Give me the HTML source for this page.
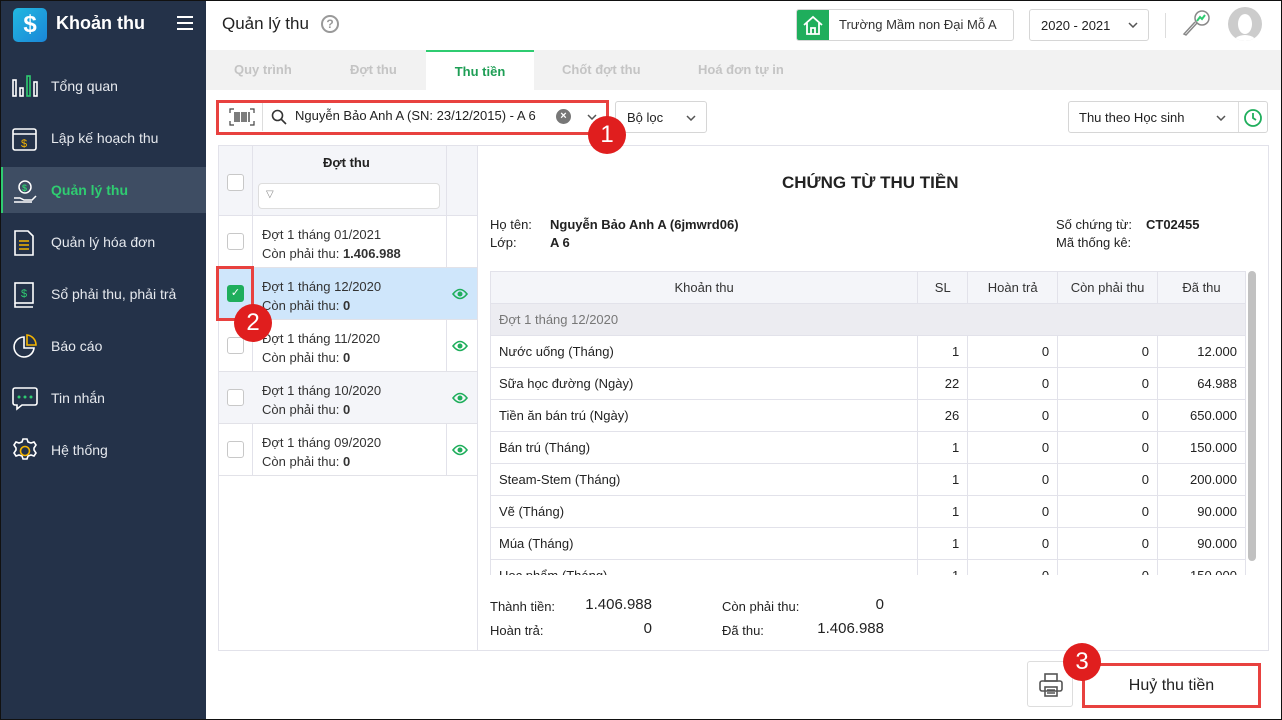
<!DOCTYPE html>
<html><head><meta charset="utf-8">
<style>
*{box-sizing:border-box;margin:0;padding:0}
body{width:1282px;height:720px;overflow:hidden;font-family:"Liberation Sans",sans-serif;font-size:13px;color:#222;background:#fff;position:relative}
.frame{position:absolute;left:0;top:0;width:1282px;height:720px;border:1px solid #111;pointer-events:none;z-index:50}
.side{position:absolute;left:0;top:0;width:206px;height:720px;background:#243249;color:#e6e9ee}
.logo{position:absolute;left:13px;top:8px;width:34px;height:34px;border-radius:5px;background:linear-gradient(135deg,#22b8e0,#1a86d8);color:#fff;font-weight:bold;font-size:24px;text-align:center;line-height:34px}
.brand{position:absolute;left:56px;top:13px;font-size:18px;font-weight:bold;color:#fff}
.burger{position:absolute;left:177px;top:16px;width:16px;height:14px;border-top:2px solid #fff;border-bottom:2px solid #fff}
.burger:after{content:"";position:absolute;left:0;top:4px;width:16px;height:2px;background:#fff}
.mi{position:absolute;left:0;width:206px;height:46px;font-size:14px;line-height:46px;padding-left:51px}
.mi svg{position:absolute;left:12px;top:11px}
.mi.act{background:#3e4d63;color:#2fcc71;font-weight:bold;border-left:3px solid #2fcc71;padding-left:48px}
.mi.act svg{left:9px}
.hdr{position:absolute;left:206px;top:0;right:0;height:50px;background:#fff;box-shadow:0 1px 3px rgba(0,0,0,.1)}
.tabs{position:absolute;left:206px;top:50px;right:0;height:40px;background:#f2f2f2}
.tab{position:absolute;top:0;height:40px;line-height:40px;font-size:13px;font-weight:bold;color:#c4c4c4}
.box{position:absolute;border:1px solid #d6d6d6;border-radius:3px;background:#fff}
.red{position:absolute;border:3px solid #e8413f}
.badge{position:absolute;width:38px;height:38px;border-radius:50%;background:#e01e1e;color:#fff;font-size:24px;text-align:center;line-height:38px;z-index:5}
.cb{position:absolute;width:17px;height:17px;border:1px solid #c8c8c8;border-radius:3px;background:#fff}
.row{position:absolute;left:219px;width:258px;height:52px;border-bottom:1px solid #e2e2e8}
.row .t{position:absolute;left:43px;top:9px;line-height:19px;font-size:13px;color:#333}
.eye{position:absolute;left:233px;top:20px}
table{border-collapse:collapse;position:absolute;left:490px;top:271px;width:756px;font-size:13px}
td,th{border:1px solid #e2e2ea;height:32px;padding:0 8px}
th{background:#f4f5f9;font-weight:normal;color:#333}
td.n{text-align:right}
.chev{position:absolute}
</style></head><body>
<div class="side">
 <div class="logo">$</div><div class="brand">Khoản thu</div><div class="burger"></div>
 <div class="mi" style="top:63px"><svg width="28" height="24" viewBox="0 0 28 24" fill="none" stroke="#fff" stroke-width="1.6"><rect x="1" y="6" width="3" height="16"/><rect x="8" y="14" width="3" height="8"/><rect x="15" y="2" width="3" height="20" stroke="#2fcc71"/><rect x="22" y="8" width="3" height="14"/></svg>Tổng quan</div>
 <div class="mi" style="top:115px"><svg width="26" height="26" viewBox="0 0 26 26" fill="none" stroke="#fff" stroke-width="1.6"><rect x="1" y="3" width="23" height="21" rx="2"/><line x1="1" y1="8" x2="24" y2="8"/><text x="9" y="21" font-size="11" fill="#f4b400" stroke="none" font-family="Liberation Sans">$</text></svg>Lập kế hoạch thu</div>
 <div class="mi act" style="top:167px"><svg width="26" height="26" viewBox="0 0 26 26" fill="none" stroke="#fff" stroke-width="1.5"><circle cx="13" cy="9" r="6"/><text x="10" y="13" font-size="9" fill="#2fcc71" stroke="none" font-family="Liberation Sans">$</text><path d="M2 20h6l4 2h8l4-4M2 24h18"/></svg>Quản lý thu</div>
 <div class="mi" style="top:219px"><svg width="24" height="26" viewBox="0 0 24 26" fill="none" stroke="#fff" stroke-width="1.6"><path d="M3 1h13l5 5v19H3z"/><path d="M7 11h10M7 15h10M7 19h10" stroke="#f4b400"/></svg>Quản lý hóa đơn</div>
 <div class="mi" style="top:271px"><svg width="24" height="26" viewBox="0 0 24 26" fill="none" stroke="#fff" stroke-width="1.6"><rect x="3" y="1" width="18" height="20"/><path d="M3 21v4h18"/><text x="9" y="15" font-size="11" fill="#2fcc71" stroke="none" font-family="Liberation Sans">$</text></svg>Sổ phải thu, phải trả</div>
 <div class="mi" style="top:323px"><svg width="26" height="26" viewBox="0 0 26 26" fill="none" stroke="#fff" stroke-width="1.6"><path d="M12 3a10 10 0 1 0 10 11H12z"/><path d="M15 1a10 10 0 0 1 9 10h-9z" stroke="#f4b400"/></svg>Báo cáo</div>
 <div class="mi" style="top:375px"><svg width="26" height="26" viewBox="0 0 26 26" fill="none" stroke="#fff" stroke-width="1.6"><path d="M3 2h20a2 2 0 0 1 2 2v13a2 2 0 0 1-2 2H10l-5 4v-4H3a2 2 0 0 1-2-2V4a2 2 0 0 1 2-2z"/><circle cx="7" cy="11" r="1.5" fill="#2fcc71" stroke="none"/><circle cx="13" cy="11" r="1.5" fill="#2fcc71" stroke="none"/><circle cx="19" cy="11" r="1.5" fill="#2fcc71" stroke="none"/></svg>Tin nhắn</div>
 <div class="mi" style="top:427px"><svg width="26" height="26" viewBox="0 0 26 26" fill="none" stroke="#fff" stroke-width="1.6"><path d="M11 1h4l1 3 3 1 3-1 2 3-2 3v2l2 3-2 3-3-1-3 1-1 3h-4l-1-3-3-1-3 1-2-3 2-3v-2L2 7l2-3 3 1 3-1z"/><circle cx="13" cy="13" r="4.5" stroke="#f4b400"/></svg>Hệ thống</div>
</div>
<div class="hdr">
 <div style="position:absolute;left:16px;top:14px;font-size:17px;color:#222">Quản lý thu</div>
 <div style="position:absolute;left:115px;top:15px;width:18px;height:18px;border:2px solid #999;border-radius:50%;color:#999;font-size:12px;font-weight:bold;text-align:center;line-height:14px">?</div>
 <div class="box" style="left:590px;top:9px;width:218px;height:32px;overflow:hidden"><div style="position:absolute;left:0;top:0;width:32px;height:32px;background:#1fae5c"><svg width="32" height="32" viewBox="0 0 32 32" fill="none" stroke="#fff" stroke-width="1.8"><path d="M7 15l9-8 9 8M10 13v11h12V13M14 24v-6h4v6"/></svg></div><div style="position:absolute;left:42px;top:7px;font-size:13px;color:#333">Trường Mầm non Đại Mỗ A</div></div>
 <div class="box" style="left:823px;top:9px;width:120px;height:32px"><div style="position:absolute;left:11px;top:8px;color:#222">2020 - 2021</div><svg class="chev" style="left:98px;top:12px" width="10" height="6" viewBox="0 0 10 6" fill="none" stroke="#555" stroke-width="1.5"><path d="M1 1l4 4 4-4"/></svg></div>
 <div style="position:absolute;left:959px;top:13px;width:1px;height:25px;background:#ddd"></div>
 <svg style="position:absolute;left:976px;top:8px" width="30" height="30" viewBox="0 0 30 30" fill="none" stroke="#888" stroke-width="1.5"><circle cx="20" cy="10" r="7"/><path d="M15 15L4 27l-2-1 11-12"/><path d="M15 13l3-4 2 2 3-4" stroke="#2fcc71" stroke-width="2"/></svg>
 <div style="position:absolute;left:1022px;top:7px;width:34px;height:34px;border-radius:50%;background:#ccc;overflow:hidden"><div style="position:absolute;left:10px;top:7px;width:14px;height:20px;border-radius:50%;background:#fff"></div><div style="position:absolute;left:4px;top:28px;width:26px;height:20px;border-radius:50%;background:#fff"></div></div>
</div>
<div class="tabs">
 <div class="tab" style="left:28px">Quy trình</div>
 <div class="tab" style="left:144px">Đợt thu</div>
 <div class="tab" style="left:220px;width:108px;background:#fff;color:#1e9e55;text-align:center;border-top:2px solid #2fcc71">Thu tiền</div>
 <div class="tab" style="left:356px">Chốt đợt thu</div>
 <div class="tab" style="left:492px">Hoá đơn tự in</div>
</div>
<svg style="position:absolute;left:229px;top:108px" width="26" height="18" viewBox="0 0 26 18" fill="none" stroke="#444" stroke-width="1.2"><path d="M1 5V1h4M21 1h4v4M25 13v4h-4M5 17H1v-4"/><path d="M6 4v10M8 4v10M10 4v10M13 4v10M15 4v10M17 4v10M20 4v10" stroke-width="1.4"/></svg>
<div style="position:absolute;left:262px;top:103px;width:1px;height:28px;background:#ddd"></div>
<svg style="position:absolute;left:271px;top:109px" width="16" height="16" viewBox="0 0 16 16" fill="none" stroke="#333" stroke-width="1.6"><circle cx="6.5" cy="6.5" r="5"/><path d="M10 10l5 5"/></svg>
<div style="position:absolute;left:295px;top:108px;width:242px;overflow:hidden;white-space:nowrap;font-size:13px;color:#222">Nguyễn Bảo Anh A (SN: 23/12/2015) - A 6</div>
<div style="position:absolute;left:556px;top:109px;width:15px;height:15px;border-radius:50%;background:#777;color:#fff;font-size:11px;line-height:15px;text-align:center;font-weight:bold">×</div>
<svg class="chev" style="left:587px;top:114px" width="10" height="6" viewBox="0 0 10 6" fill="none" stroke="#555" stroke-width="1.5"><path d="M1 1l4 4 4-4"/></svg>
<div class="red" style="left:216px;top:100px;width:393px;height:35px"></div>
<div class="badge" style="left:588px;top:116px">1</div>
<div class="box" style="left:615px;top:101px;width:92px;height:32px"><div style="position:absolute;left:11px;top:8px">Bộ lọc</div><svg class="chev" style="left:70px;top:13px" width="10" height="6" viewBox="0 0 10 6" fill="none" stroke="#555" stroke-width="1.5"><path d="M1 1l4 4 4-4"/></svg></div>
<div class="box" style="left:1068px;top:101px;width:200px;height:32px"><div style="position:absolute;left:10px;top:8px">Thu theo Học sinh</div><svg class="chev" style="left:147px;top:13px" width="10" height="6" viewBox="0 0 10 6" fill="none" stroke="#555" stroke-width="1.5"><path d="M1 1l4 4 4-4"/></svg><div style="position:absolute;left:169px;top:0;width:1px;height:30px;background:#ddd"></div><svg style="position:absolute;left:174px;top:6px" width="20" height="20" viewBox="0 0 20 20" fill="none" stroke="#1fae5c" stroke-width="1.8"><circle cx="10" cy="10" r="8"/><path d="M10 5v5l3 2"/></svg></div>
<div style="position:absolute;left:218px;top:145px;width:1051px;height:506px;border:1px solid #e2e2ea"></div>
<div style="position:absolute;left:219px;top:146px;width:258px;height:70px;background:#f4f5f9;border-bottom:1px solid #e2e2ea"></div>
<div style="position:absolute;left:477px;top:146px;width:1px;height:504px;background:#e2e2ea"></div>
<div style="position:absolute;left:252px;top:146px;width:1px;height:330px;background:#e2e2ea"></div>
<div style="position:absolute;left:446px;top:146px;width:1px;height:330px;background:#e2e2ea"></div>
<div style="position:absolute;left:323px;top:155px;font-weight:bold;font-size:13px">Đợt thu</div>
<div style="position:absolute;left:258px;top:183px;width:182px;height:26px;border:1px solid #ddd;border-radius:4px;background:#fff;font-size:10px;color:#888;padding:5px 0 0 7px">▽</div>
<div class="cb" style="left:227px;top:174px"></div>
<div class="row" style="top:216px"><div class="cb" style="left:8px;top:17px"></div><div class="t">Đợt 1 tháng 01/2021<br>Còn phải thu: <b>1.406.988</b></div></div>
<div class="row" style="top:268px;background:#cfe6fb"><div class="cb" style="left:8px;top:17px;background:#1fae5c;border-color:#1fae5c;color:#fff;font-size:11px;text-align:center;line-height:15px">✓</div><div class="t">Đợt 1 tháng 12/2020<br>Còn phải thu: <b>0</b></div><svg class="eye" width="16" height="12" viewBox="0 0 16 12"><path d="M1 6q7-9 14 0q-7 9-14 0z" fill="none" stroke="#1fae5c" stroke-width="1.6"/><circle cx="8" cy="6" r="2.5" fill="#1fae5c"/></svg></div>
<div class="row" style="top:320px"><div class="cb" style="left:8px;top:17px"></div><div class="t">Đợt 1 tháng 11/2020<br>Còn phải thu: <b>0</b></div><svg class="eye" width="16" height="12" viewBox="0 0 16 12"><path d="M1 6q7-9 14 0q-7 9-14 0z" fill="none" stroke="#1fae5c" stroke-width="1.6"/><circle cx="8" cy="6" r="2.5" fill="#1fae5c"/></svg></div>
<div class="row" style="top:372px;background:#f4f5f9"><div class="cb" style="left:8px;top:17px"></div><div class="t">Đợt 1 tháng 10/2020<br>Còn phải thu: <b>0</b></div><svg class="eye" width="16" height="12" viewBox="0 0 16 12"><path d="M1 6q7-9 14 0q-7 9-14 0z" fill="none" stroke="#1fae5c" stroke-width="1.6"/><circle cx="8" cy="6" r="2.5" fill="#1fae5c"/></svg></div>
<div class="row" style="top:424px"><div class="cb" style="left:8px;top:17px"></div><div class="t">Đợt 1 tháng 09/2020<br>Còn phải thu: <b>0</b></div><svg class="eye" width="16" height="12" viewBox="0 0 16 12"><path d="M1 6q7-9 14 0q-7 9-14 0z" fill="none" stroke="#1fae5c" stroke-width="1.6"/><circle cx="8" cy="6" r="2.5" fill="#1fae5c"/></svg></div>
<div class="red" style="left:216px;top:266px;width:38px;height:55px"></div>
<div class="badge" style="left:234px;top:304px">2</div>
<div style="position:absolute;left:782px;top:173px;font-size:17px;font-weight:bold">CHỨNG TỪ THU TIỀN</div>
<div style="position:absolute;left:490px;top:216px;line-height:18px">Họ tên:<br>Lớp:</div>
<div style="position:absolute;left:550px;top:216px;line-height:18px;font-weight:bold">Nguyễn Bảo Anh A (6jmwrd06)<br>A 6</div>
<div style="position:absolute;left:1056px;top:216px;line-height:18px">Số chứng từ:<br>Mã thống kê:</div>
<div style="position:absolute;left:1146px;top:216px;line-height:18px;font-weight:bold">CT02455</div>
<div style="position:absolute;left:490px;top:271px;width:766px;height:304px;overflow:hidden">
<table style="left:0;top:0">
<tr><th style="width:428px">Khoản thu</th><th style="width:50px">SL</th><th style="width:90px">Hoàn trả</th><th style="width:100px">Còn phải thu</th><th style="width:88px">Đã thu</th></tr>
<tr><td colspan="5" style="background:#ececf1;color:#777">Đợt 1 tháng 12/2020</td></tr>
<tr><td>Nước uống (Tháng)</td><td class="n">1</td><td class="n">0</td><td class="n">0</td><td class="n">12.000</td></tr>
<tr><td>Sữa học đường (Ngày)</td><td class="n">22</td><td class="n">0</td><td class="n">0</td><td class="n">64.988</td></tr>
<tr><td>Tiền ăn bán trú (Ngày)</td><td class="n">26</td><td class="n">0</td><td class="n">0</td><td class="n">650.000</td></tr>
<tr><td>Bán trú (Tháng)</td><td class="n">1</td><td class="n">0</td><td class="n">0</td><td class="n">150.000</td></tr>
<tr><td>Steam-Stem (Tháng)</td><td class="n">1</td><td class="n">0</td><td class="n">0</td><td class="n">200.000</td></tr>
<tr><td>Vẽ (Tháng)</td><td class="n">1</td><td class="n">0</td><td class="n">0</td><td class="n">90.000</td></tr>
<tr><td>Múa (Tháng)</td><td class="n">1</td><td class="n">0</td><td class="n">0</td><td class="n">90.000</td></tr>
<tr><td>Học phẩm (Tháng)</td><td class="n">1</td><td class="n">0</td><td class="n">0</td><td class="n">150.000</td></tr>
</table>
<div style="position:absolute;left:758px;top:0;width:8px;height:290px;background:#c1c1c1;border-radius:4px"></div>
</div>
<div style="position:absolute;left:490px;top:595px;line-height:24px">Thành tiền:<br>Hoàn trả:</div>
<div style="position:absolute;left:560px;top:593px;width:92px;text-align:right;line-height:24px;font-size:15px">1.406.988<br>0</div>
<div style="position:absolute;left:722px;top:595px;line-height:24px">Còn phải thu:<br>Đã thu:</div>
<div style="position:absolute;left:790px;top:593px;width:94px;text-align:right;line-height:24px;font-size:15px">0<br>1.406.988</div>
<div class="box" style="left:1027px;top:661px;width:46px;height:46px;border-color:#ddd"><svg style="position:absolute;left:10px;top:10px" width="26" height="26" viewBox="0 0 26 26" fill="none" stroke="#555" stroke-width="1.6"><rect x="7" y="2" width="12" height="7"/><rect x="2" y="9" width="22" height="10" rx="2"/><rect x="7" y="15" width="12" height="9"/><path d="M9 18h8M9 21h8"/></svg></div>
<div class="red" style="left:1082px;top:663px;width:179px;height:45px;background:#fff;text-align:center;line-height:39px;font-size:16px;color:#222">Huỷ thu tiền</div>
<div class="badge" style="left:1063px;top:643px">3</div>
<div class="frame"></div>
</body></html>
